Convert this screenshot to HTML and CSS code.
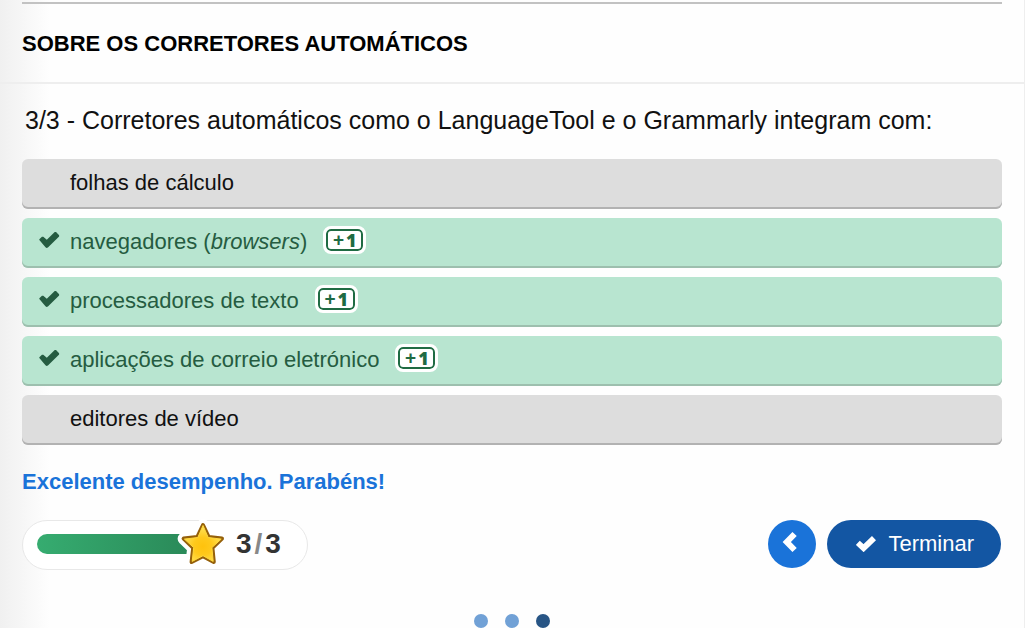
FILE: index.html
```html
<!DOCTYPE html>
<html lang="pt">
<head>
<meta charset="utf-8">
<meta name="viewport" content="width=device-width, initial-scale=1">
<title>Sobre os corretores automáticos</title>
<link rel="stylesheet" href="styles.css">
</head>
<body>
<div class="panel">
  <header class="header">
    <hr class="rule">
    <h1 class="title">SOBRE OS CORRETORES AUTOMÁTICOS</h1>
  </header>
  <main class="quiz">
    <fieldset class="answers">
      <legend class="question">3/3 - Corretores automáticos como o LanguageTool e o Grammarly integram com:</legend>
      <label class="answer"><input class="tick" type="checkbox"><span>folhas de cálculo</span></label>
      <label class="answer correct"><input class="tick" type="checkbox" checked><span>navegadores (<i>browsers</i>)</span><span class="point"><span class="plus">+</span><span>1</span></span></label>
      <label class="answer correct"><input class="tick" type="checkbox" checked><span>processadores de texto</span><span class="point"><span class="plus">+</span><span>1</span></span></label>
      <label class="answer correct"><input class="tick" type="checkbox" checked><span>aplicações de correio eletrónico</span><span class="point"><span class="plus">+</span><span>1</span></span></label>
      <label class="answer"><input class="tick" type="checkbox"><span>editores de vídeo</span></label>
    </fieldset>
    <p class="feedback">Excelente desempenho. Parabéns!</p>
    <div class="actions">
      <div class="score">
        <div class="bar"></div>
        <svg class="star" viewBox="0 0 48 48" aria-hidden="true">
          <defs>
            <radialGradient id="gold" cx=".5" cy=".58" r=".5">
              <stop offset="0" stop-color="#ffc20d"/>
              <stop offset=".5" stop-color="#ffc91c"/>
              <stop offset="1" stop-color="#ffdf50"/>
            </radialGradient>
          </defs>
          <g stroke-linejoin="round">
            <path d="M24 5 L29.7 17 L43 18.6 L33.4 27.8 L34.8 42 L24 36.2 L12.6 42 L14.2 27.8 L4.6 18.6 L18.3 17Z" fill="#fff" stroke="#fff" stroke-width="12"/>
            <path d="M24 5 L29.7 17 L43 18.6 L33.4 27.8 L34.8 42 L24 36.2 L12.6 42 L14.2 27.8 L4.6 18.6 L18.3 17Z" fill="#95600a" stroke="#95600a" stroke-width="4"/>
            <path d="M24 5.5 L29.2 17.5 L42.2 19.1 L32.9 27.6 L34.2 41.4 L24 35.7 L13.2 41.4 L14.7 27.6 L5.4 19.1 L18.8 17.5Z" fill="url(#gold)" stroke="#ffd83c" stroke-width="1"/>
          </g>
        </svg>
        <div class="points"><span>3</span><span class="slash">/</span><span>3</span></div>
      </div>
      <div class="buttons">
        <button class="back" type="button" aria-label="Anterior">
          <svg width="16" height="22" viewBox="0 0 16 22" aria-hidden="true"><path d="M12.6 3 L4.8 11 L12.6 19" fill="none" stroke="#fff" stroke-width="6"/></svg>
        </button>
        <button class="finish" type="button">
          <svg width="20" height="16" viewBox="0 0 20 16" aria-hidden="true"><path d="M1.8 6.8 L7.6 12.2 L18 2.2" fill="none" stroke="#fff" stroke-width="5.8"/></svg>
          Terminar
        </button>
      </div>
    </div>
  </main>
  <nav class="dots" aria-label="Perguntas">
    <a class="dot" href="#1" aria-label="Pergunta 1"></a>
    <a class="dot" href="#2" aria-label="Pergunta 2"></a>
    <a class="dot current" href="#3" aria-label="Pergunta 3" aria-current="true"></a>
  </nav>
</div>
</body>
</html>
```
FILE: styles.css
```css
* { box-sizing: border-box; }

body {
  margin: 0;
  background: #fff;
  color: #111;
  font: 22px/26px "Liberation Sans", Arial, sans-serif;
  overflow: hidden;
}

.panel {
  min-height: 100vh;
  margin-right: 3px;
  border-right: 1px solid #eee;
  background: linear-gradient(to right, #f0f0f0, #fefefe 50px);
}

.header {
  padding: 2px 22px 0;
  border-bottom: 2px solid #eee;
}

.rule {
  height: 2px;
  margin: 0;
  border: 0;
  background: #c2c2c2;
}

.title {
  margin: 0;
  padding: 27px 0 25px;
  color: #000;
  font-size: 22px;
  line-height: 26px;
}

.quiz { padding: 21px 22px 0; }

.answers {
  display: flex;
  flex-direction: column;
  gap: 9px;
  margin: 0;
  padding: 0;
  border: 0;
}

.question {
  margin-bottom: 24px;
  padding: 0 3px;
  font-size: 25px;
  line-height: 30px;
}

.answer {
  display: flex;
  align-items: center;
  min-height: 50px;
  padding: 0 16px 2px;
  border-radius: 6px;
  background: #ddd;
  box-shadow: inset 0 -2px #b2b2b2;
}

.correct {
  background: #b8e5d0;
  box-shadow: inset 0 -2px #9dbfae;
  color: #255c41;
}

.tick {
  appearance: none;
  width: 22px;
  height: 18px;
  margin: 0 10px 4px 0;
}

.tick:checked {
  background: #255c41;
  clip-path: polygon(6% 50%, 6% 46%, 18% 32%, 24% 32%, 40% 49%, 76% 6%, 82% 6%, 96% 23%, 96% 30%, 45% 92%, 39% 94%, 34% 90%);
}

.point {
  display: flex;
  align-items: center;
  justify-content: center;
  gap: 2px;
  width: 37px;
  height: 22px;
  margin: 0 0 4px 19px;
  border: 2px solid #1f6b43;
  border-radius: 5px;
  outline: 3px solid #fff;
  background: #fff;
  color: #1f6b43;
  font: 800 18px/18px "Open Sans", sans-serif;
}

.plus {
  font: bold 19px/18px "Liberation Sans", Arial, sans-serif;
}

.feedback {
  margin: 24px 0 25px;
  color: #1a73d9;
  font-weight: bold;
}

.actions {
  display: flex;
  flex-wrap: wrap;
  justify-content: space-between;
  gap: 12px;
}

.score {
  display: flex;
  align-items: center;
  height: 50px;
  padding: 0 26px 2px 14px;
  border: 1px solid #e8e8e8;
  border-radius: 25px;
  background: #fff;
}

.bar {
  width: 150px;
  height: 20px;
  border-radius: 10px 0 0 10px;
  background: linear-gradient(to right, #36ac70, #2a8a59);
}

.star {
  width: 48px;
  height: 48px;
  margin-left: -8px;
  overflow: visible;
}

.points {
  display: flex;
  gap: 3px;
  margin-left: 9px;
  color: #333;
  font-size: 28px;
  font-weight: bold;
}

.slash {
  color: #888;
}

.buttons {
  display: flex;
  gap: 11px;
  margin-right: 1px;
}

.back,
.finish {
  display: flex;
  align-items: center;
  justify-content: center;
  height: 48px;
  padding: 0;
  border: 0;
  border-radius: 24px;
  color: #fff;
  font: inherit;
}

.back {
  width: 48px;
  padding-right: 4px;
  padding-bottom: 4px;
  background: #1a73d9;
}

.finish {
  gap: 12px;
  padding: 0 27px 0 29px;
  background: #1356a3;
}

.dots {
  display: flex;
  justify-content: center;
  gap: 17px;
  padding-top: 44px;
}

.dot {
  width: 14px;
  height: 14px;
  border-radius: 50%;
  background: #71a1d6;
}

.current { background: #285585; }
```
